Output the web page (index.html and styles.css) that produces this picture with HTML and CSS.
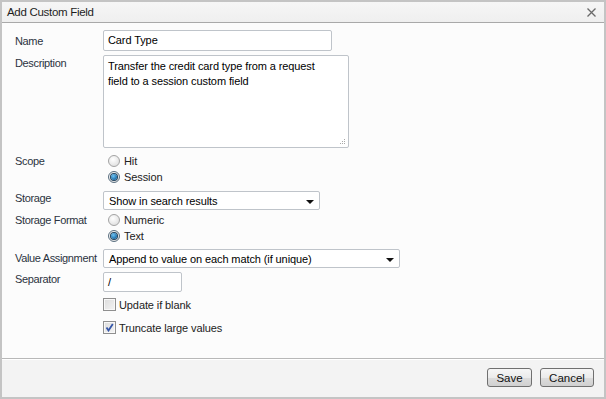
FILE: index.html
```html
<!DOCTYPE html>
<html lang="en">
<head>
    <meta charset="UTF-8">
    <title>Add Custom Field</title>
    <link rel="stylesheet" href="styles.css">
</head>
<body>
    <div class="dialog">
        <div class="dialog-header">
            <span class="dialog-title">Add Custom Field</span>
            <span class="close-btn">
                <svg width="9" height="9" viewBox="0 0 9 9"><path d="M0.5 0.5 L8.5 8.5 M8.5 0.5 L0.5 8.5" stroke="#6a6a6a" stroke-width="1.3" fill="none"/></svg>
            </span>
        </div>

        <div class="dialog-body">
            <div class="row row-name">
                <label>Name</label>
                <div class="text-input name-input">Card Type</div>
            </div>

            <div class="row row-desc">
                <label>Description</label>
                <div class="textarea">
                    Transfer the credit card type from a request field to a session custom field
                    <span class="grip">
                        <svg width="7" height="7" viewBox="0 0 7 7" fill="#a8a8a8"><rect x="5" y="1" width="1" height="1"/><rect x="3" y="3" width="1" height="1"/><rect x="5" y="3" width="1" height="1"/><rect x="1" y="5" width="1" height="1"/><rect x="3" y="5" width="1" height="1"/><rect x="5" y="5" width="1" height="1"/></svg>
                    </span>
                </div>
            </div>

            <div class="row row-scope">
                <label>Scope</label>
                <div class="radio-group">
                    <div class="option"><span class="radio"></span>Hit</div>
                    <div class="option"><span class="radio checked"></span>Session</div>
                </div>
            </div>

            <div class="row row-storage">
                <label>Storage</label>
                <div class="select storage-select">
                    <span>Show in search results</span>
                    <span class="arrow"></span>
                </div>
            </div>

            <div class="row row-format">
                <label>Storage Format</label>
                <div class="radio-group">
                    <div class="option"><span class="radio"></span>Numeric</div>
                    <div class="option"><span class="radio checked"></span>Text</div>
                </div>
            </div>

            <div class="row row-value">
                <label>Value Assignment</label>
                <div class="select value-select">
                    <span>Append to value on each match (if unique)</span>
                    <span class="arrow"></span>
                </div>
            </div>

            <div class="row row-sep">
                <label>Separator</label>
                <div class="text-input sep-input">/</div>
            </div>

            <div class="row row-check1">
                <label></label>
                <div class="option check-option"><span class="checkbox"></span>Update if blank</div>
            </div>

            <div class="row row-check2">
                <label></label>
                <div class="option check-option"><span class="checkbox checked">
                    <svg width="9" height="9" viewBox="0 0 9 9"><path d="M1.5 4.5 L3.5 7.5 L7.8 1" stroke="#3556a8" stroke-width="1.8" fill="none"/></svg>
                </span>Truncate large values</div>
            </div>
        </div>

        <div class="dialog-footer">
            <button class="btn btn-save">Save</button>
            <button class="btn btn-cancel">Cancel</button>
        </div>
    </div>
</body>
</html>
```

FILE: styles.css
```css
* {
    margin: 0;
    padding: 0;
    box-sizing: border-box;
}

body {
    font-family: 'Liberation Sans', Tahoma, Arial, sans-serif;
    font-size: 11px;
    letter-spacing: -0.1px;
    color: #000;
    background: #fff;
}

.dialog {
    width: 606px;
    height: 399px;
    border: 2px solid #c4c4c4;
    background: #fcfcfc;
    display: flex;
    flex-direction: column;
}

.dialog-header {
    height: 21px;
    background: linear-gradient(#f6f6f6, #efefef);
    border-bottom: 1px solid #a9a9a9;
    display: flex;
    align-items: center;
    justify-content: space-between;
    padding: 0 7px 0 5px;
}

.dialog-title {
    color: #1e1e1e;
    font-size: 11.5px;
    letter-spacing: -0.3px;
}

.close-btn {
    display: flex;
    margin-right: 1px;
}

.dialog-body {
    flex: 1;
    padding: 7px 0 0 13px;
    border-bottom: 1px solid #b8b8b8;
}

.row {
    display: grid;
    grid-template-columns: 88px 1fr;
    align-items: start;
}

.row label {
    color: #2b3340;
    line-height: 16px;
    white-space: nowrap;
    letter-spacing: -0.35px;
}

.text-input,
.textarea,
.select {
    background: #fff;
    border: 1px solid #bfc4ca;
    border-radius: 2px;
    padding: 0 4px;
}

.text-input {
    height: 21px;
    line-height: 19px;
}

.name-input {
    width: 229px;
}

.row-name label {
    padding-top: 3px;
}

.row-desc {
    margin-top: 4px;
}

.textarea {
    position: relative;
    width: 246px;
    height: 93px;
    padding: 3px 20px 3px 4px;
    line-height: 15px;
}

.grip {
    position: absolute;
    right: 2px;
    bottom: 2px;
    display: flex;
}

.row-scope {
    margin-top: 5px;
}

.radio-group {
    display: flex;
    flex-direction: column;
}

.option {
    display: flex;
    align-items: center;
    height: 16px;
    color: #222;
}

.radio {
    width: 12px;
    height: 12px;
    border-radius: 50%;
    border: 1px solid #a3a3a3;
    background: radial-gradient(circle at 40% 35%, #ffffff, #e4e4e4 70%);
    margin: 0 4px 0 5px;
    display: flex;
    align-items: center;
    justify-content: center;
}

.radio.checked {
    border-color: #5a6f80;
}

.radio.checked::after {
    content: "";
    width: 6px;
    height: 6px;
    border-radius: 50%;
    background: radial-gradient(circle at 40% 35%, #6fc3f2, #1a6ca8 70%);
    box-shadow: 0 0 0 1px #23445e;
}

.row-storage {
    margin-top: 6px;
}

.select {
    height: 19px;
    display: flex;
    align-items: center;
    justify-content: space-between;
    padding: 0 5px;
}

.arrow {
    width: 0;
    height: 0;
    border-left: 4px solid transparent;
    border-right: 4px solid transparent;
    border-top: 4px solid #111;
    margin-top: 2px;
}

.storage-select {
    width: 217px;
}

.value-select {
    width: 297px;
}

.row-storage label {
    line-height: 14px;
}

.row-value label {
    padding-top: 1px;
}

.row-sep label {
    line-height: 15px;
}

.row-format {
    margin-top: 2px;
}

.row-value {
    margin-top: 5px;
}

.row-sep {
    margin-top: 4px;
}

.sep-input {
    width: 79px;
    height: 20px;
    line-height: 18px;
}

.row-check1 {
    margin-top: 6px;
}

.row-check2 {
    margin-top: 10px;
}

.check-option {
    height: 13px;
}

.checkbox {
    width: 13px;
    height: 13px;
    border: 1px solid #8f8f8f;
    background: linear-gradient(135deg, #dcdcdc, #f4f4f4);
    box-shadow: inset 0 0 0 1px #f8f8f8;
    margin-right: 3px;
    display: flex;
    align-items: center;
    justify-content: center;
}

.dialog-footer {
    height: 38px;
    background: #f3f3f3;
    border-top: 1px solid #ffffff;
    display: flex;
    justify-content: flex-end;
    align-items: center;
    gap: 8px;
    padding: 0 10px 2px 0;
}

.btn {
    font-family: 'Liberation Sans', Tahoma, Arial, sans-serif;
    font-size: 11.5px;
    color: #111;
    height: 19px;
    border: 1px solid #707070;
    border-radius: 3px;
    background: linear-gradient(#f6f6f6 0%, #ebebeb 50%, #dddddd 51%, #d0d0d0 100%);
}

.btn-save {
    width: 45px;
}

.btn-cancel {
    width: 54px;
}
```
